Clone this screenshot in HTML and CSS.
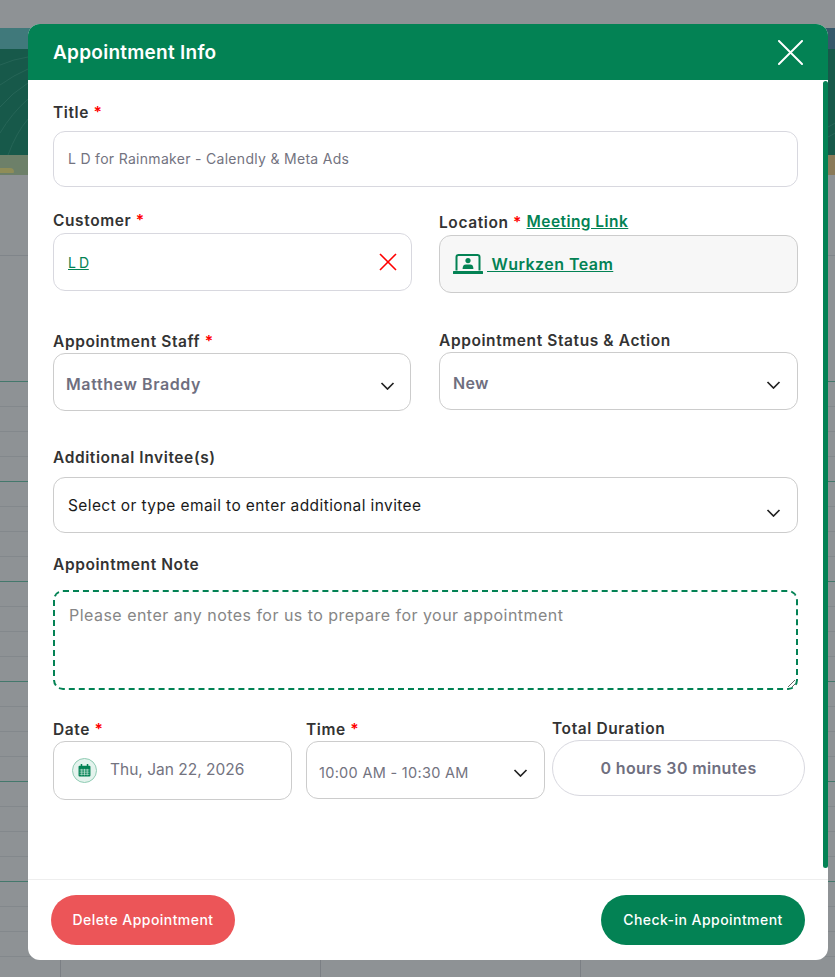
FILE: index.html
```html
<!DOCTYPE html>
<html>

<head>
    <title>Appointment Info</title>
    <meta charset="utf-8">
    <meta name="viewport" content="width=device-width, initial-scale=1.0">
    <link rel="stylesheet" href="styles.css">
</head>

<body>
    <!-- dimmed page behind the modal -->
    <div class="page">
        <div class="banner">
            <div class="banner-top"></div>
            <div class="banner-main">
                <svg class="banner-lines" viewBox="0 0 835 106" preserveAspectRatio="none">
                    <path d="M0 16 Q14 10 28 8" />
                    <path d="M0 36 Q14 26 28 20" />
                    <path d="M0 58 Q12 44 28 34" />
                    <path d="M0 84 Q12 64 28 50" />
                    <path d="M8 106 Q16 84 28 70" />
                    <path d="M828 78 Q832 76 835 74" />
                    <path d="M828 88 Q832 86 835 84" />
                </svg>
            </div>
            <div class="banner-bottom">
                <span class="banner-blob"></span>
            </div>
        </div>
        <div class="calendar-head"></div>
        <div class="calendar">
            <div class="cal-hour"></div>
            <div class="cal-hour"></div>
            <div class="cal-hour"></div>
            <div class="cal-hour"></div>
            <div class="cal-hour"></div>
            <div class="cal-hour"></div>
        </div>
    </div>

    <div class="modal">
        <div class="modal-header">
            <h2>Appointment Info</h2>
            <svg class="close-icon" viewBox="0 0 26 26">
                <path d="M1 1 L25 25 M25 1 L1 25" />
            </svg>
        </div>

        <div class="modal-body">
            <div class="form-row row-title">
                <label>Title <span class="req">*</span></label>
                <div class="box box-title">L D for Rainmaker - Calendly &amp; Meta Ads</div>
            </div>

            <div class="two-col row-customer">
                <div>
                    <label>Customer <span class="req">*</span></label>
                    <div class="box box-customer">
                        <a class="customer-link" href="#">L D</a>
                        <svg class="clear-icon" viewBox="0 0 18 18">
                            <path d="M1 1 L17 17 M17 1 L1 17" />
                        </svg>
                    </div>
                </div>
                <div class="col-location">
                    <label>Location <span class="req">*</span> <a class="meeting-link" href="#">Meeting Link</a></label>
                    <div class="box box-location">
                        <svg class="team-icon" viewBox="0 0 30 20">
                            <path class="team-frame" d="M3.5 16.5 V3 Q3.5 1 5.5 1 H24.5 Q26.5 1 26.5 3 V16.5" />
                            <circle cx="15" cy="6.6" r="2.6" />
                            <path d="M9.6 15 Q9.6 10.6 13 10.6 H17 Q20.4 10.6 20.4 15 Z" />
                            <rect x="0" y="17" width="30" height="3" rx="0.5" />
                        </svg>
                        <a class="team-link" href="#">&nbsp;Wurkzen Team</a>
                    </div>
                </div>
            </div>

            <div class="two-col row-staff">
                <div class="col-staff">
                    <label>Appointment Staff <span class="req">*</span></label>
                    <div class="box box-select box-staff">
                        <span>Matthew Braddy</span>
                        <svg class="chevron chevron-mid" viewBox="0 0 14 8"><path d="M1 1 L7 7 L13 1" /></svg>
                    </div>
                </div>
                <div class="col-status">
                    <label>Appointment Status &amp; Action</label>
                    <div class="box box-select box-status">
                        <span>New</span>
                        <svg class="chevron chevron-mid" viewBox="0 0 14 8"><path d="M1 1 L7 7 L13 1" /></svg>
                    </div>
                </div>
            </div>

            <div class="form-row row-invitee">
                <label>Additional Invitee(s)</label>
                <div class="box box-invitee">
                    <span>Select or type email to enter additional invitee</span>
                    <svg class="chevron chevron-low" viewBox="0 0 14 8"><path d="M1 1 L7 7 L13 1" /></svg>
                </div>
            </div>

            <div class="form-row row-note">
                <label>Appointment Note</label>
                <textarea class="note" placeholder="Please enter any notes for us to prepare for your appointment"></textarea>
            </div>

            <div class="date-row">
                <div class="col-date">
                    <label>Date <span class="req">*</span></label>
                    <div class="box box-date">
                        <span class="date-badge">
                            <svg viewBox="0 0 12 12">
                                <rect class="cal-body" x="0.5" y="1.5" width="11" height="10" rx="1" />
                                <rect class="cal-ring" x="2.5" y="0" width="1.4" height="2.6" />
                                <rect class="cal-ring" x="8.1" y="0" width="1.4" height="2.6" />
                                <path class="cal-grid" d="M1.5 5.5 H10.5 M1.5 7.5 H10.5 M1.5 9.5 H10.5 M3.5 4.5 V10.5 M6 4.5 V10.5 M8.5 4.5 V10.5" />
                            </svg>
                        </span>
                        <span class="date-text">Thu, Jan 22, 2026</span>
                    </div>
                </div>
                <div class="col-time">
                    <label>Time <span class="req">*</span></label>
                    <div class="box box-select box-time">
                        <span>10:00 AM - 10:30 AM</span>
                        <svg class="chevron" viewBox="0 0 14 8"><path d="M1 1 L7 7 L13 1" /></svg>
                    </div>
                </div>
                <div class="col-duration">
                    <label>Total Duration</label>
                    <div class="box-duration">0 hours 30 minutes</div>
                </div>
            </div>
            <div class="scroll-thumb"></div>
        </div>

        <div class="modal-footer">
            <button class="btn btn-delete">Delete Appointment</button>
            <button class="btn btn-checkin">Check-in Appointment</button>
        </div>
    </div>
</body>

</html>
```
FILE: styles.css
```css
* {
    box-sizing: border-box;
}

html,
body {
    margin: 0;
    height: 100%;
}

body {
    font-family: Inter, "Open Sans", sans-serif;
    background-color: #8e9295;
    overflow: hidden;
    color: #333;
}

/* page behind the backdrop */
.page {
    padding-top: 28px;
}

.banner-top {
    height: 21px;
    background: linear-gradient(90deg, #40797b 0, #40797b 30px, #35586a 100%);
}

.banner-main {
    height: 106px;
    background-color: #17594a;
}

.banner-lines {
    display: block;
    width: 100%;
    height: 100%;
}

.banner-lines path {
    fill: none;
    stroke: #266557;
    stroke-width: 1;
}

.banner-bottom {
    height: 20px;
    background: linear-gradient(90deg, #6d8069 0, #6d8069 30px, #8a7a58 100%);
    display: flex;
    align-items: flex-end;
    padding-bottom: 1px;
}

.banner-blob {
    width: 14px;
    height: 5px;
    margin-bottom: 1px;
    background-color: #8f8d58;
    border-radius: 0 8px 2px 0;
}

.calendar-head {
    height: 206px;
    background: linear-gradient(#80858a, #80858a) 0 80px / 100% 1px no-repeat;
}

.calendar {
    background-image: linear-gradient(90deg, #7b7f84 1px, transparent 1px);
    background-size: 260px 100%;
    background-position: 60px 0;
}

.cal-hour {
    height: 100px;
    border-top: 1px solid #44786c;
    background-image: linear-gradient(#83888c 1px, transparent 1px);
    background-size: 100% 25px;
    background-position: 0 24px;
}

/* modal */
.modal {
    position: absolute;
    left: 28px;
    top: 24px;
    width: 800px;
    height: 936px;
    background-color: #fff;
    border-radius: 12px;
    display: flex;
    flex-direction: column;
    overflow: hidden;
}

.modal-header {
    height: 56px;
    flex: none;
    background-color: #038254;
    display: flex;
    align-items: center;
    justify-content: space-between;
    padding: 0 25px;
}

.modal-header h2 {
    margin: 0;
    color: #fff;
    font-size: 19px;
    font-weight: 600;
    letter-spacing: 0.26px;
}

.close-icon {
    width: 25px;
    height: 25px;
}

.close-icon path {
    fill: none;
    stroke: #fff;
    stroke-width: 2;
    stroke-linecap: round;
}

.modal-body {
    position: relative;
    flex: 1;
    padding: 0 30px 0 25px;
}

.scroll-thumb {
    position: absolute;
    right: 0;
    top: 1px;
    width: 5px;
    height: 787px;
    background-color: #038254;
    border-radius: 3px;
}

label {
    display: block;
    height: 20px;
    line-height: 22px;
    font-size: 15.5px;
    font-weight: 600;
    letter-spacing: 0.6px;
    color: #333;
}

.req {
    color: #f00;
}

.box {
    display: flex;
    align-items: center;
    background-color: #fff;
    border: 1px solid #d8d8df;
    border-radius: 12px;
}

.two-col {
    display: grid;
    grid-template-columns: 359px 359px;
    column-gap: 27px;
}

.row-title {
    padding-top: 22px;
}

.box-title {
    margin-top: 9px;
    height: 56px;
    padding: 0 14px 2px;
    font-size: 14px;
    letter-spacing: 0.3px;
    color: #73737f;
}

.row-customer {
    margin-top: 23px;
}

.box-customer {
    margin-top: 3px;
    height: 58px;
    padding: 0 14px;
    justify-content: space-between;
}

.customer-link {
    font-size: 14px;
    letter-spacing: -0.4px;
    color: #038254;
}

.clear-icon {
    width: 18px;
    height: 18px;
}

.clear-icon path {
    fill: none;
    stroke: #f00;
    stroke-width: 1.6;
}

.col-location {
    padding-top: 2px;
}

.meeting-link {
    letter-spacing: 0.45px;
    color: #038254;
    position: relative;
    top: -1px;
}

.box-location {
    margin-top: 3px;
    height: 58px;
    padding: 0 13px;
    background-color: #f7f7f7;
    border-color: #cccccc;
}

.team-icon {
    width: 30px;
    height: 20px;
    fill: #038254;
}

.team-frame {
    fill: none;
    stroke: #038254;
    stroke-width: 2;
}

.team-link {
    margin-left: 4px;
    font-size: 16px;
    font-weight: 600;
    letter-spacing: 0.45px;
    color: #038254;
}

.row-staff {
    margin-top: 38px;
}

.col-status {
    margin-top: -1px;
}

.box-select {
    justify-content: space-between;
    border-color: #ccc;
}

.box-staff {
    margin-top: 2px;
    height: 58px;
    width: 358px;
    padding: 4px 15px 0 12px;
    font-size: 16px;
    font-weight: 600;
    letter-spacing: 0.6px;
    color: #6f6f7f;
}

.box-status {
    margin-top: 2px;
    height: 58px;
    padding: 4px 16px 0 13px;
    font-size: 16px;
    font-weight: 600;
    letter-spacing: 0.3px;
    color: #6f6f7f;
}

.chevron {
    width: 15px;
    height: 8px;
    flex: none;
}

.chevron path {
    fill: none;
    stroke: #222;
    stroke-width: 1.7;
}

.chevron-mid {
    margin-top: 3px;
}

.chevron-low {
    position: relative;
    top: 8px;
}

.row-invitee {
    margin-top: 36px;
}

.box-invitee {
    margin-top: 10px;
    height: 56px;
    padding: 0 16px 0 14px;
    justify-content: space-between;
    border-color: #ccc;
    font-size: 15.5px;
    letter-spacing: 0.4px;
    color: #1a1a1a;
}

.row-note {
    margin-top: 21px;
}

.note {
    display: block;
    width: 100%;
    height: 100px;
    margin-top: 16px;
    padding: 13px 14px;
    border: 2px dashed #038254;
    border-radius: 10px;
    outline: none;
    font-family: Inter, "Open Sans", sans-serif;
    font-size: 16px;
    letter-spacing: 0.47px;
    line-height: 20px;
    color: #333;
}

.note::placeholder {
    color: #868686;
    opacity: 1;
}

.date-row {
    display: flex;
    margin-top: 29px;
}

.col-date {
    width: 239px;
    flex: none;
}

.box-date {
    margin-top: 2px;
    height: 59px;
    padding: 0 18px;
    gap: 13px;
    border-color: #ccc;
    font-size: 15.5px;
    color: #73737f;
}

.date-text {
    margin-bottom: 2px;
}

.date-badge {
    width: 25px;
    height: 25px;
    flex: none;
    border-radius: 50%;
    border: 1px solid #8fcbb3;
    background-color: #e4f3ed;
    display: flex;
    align-items: center;
    justify-content: center;
}

.date-badge svg {
    width: 13px;
    height: 13px;
}

.cal-body {
    fill: #038254;
}

.cal-ring {
    fill: #038254;
}

.cal-grid {
    fill: none;
    stroke: #bfe2d4;
    stroke-width: 0.7;
}

.col-time {
    width: 239px;
    flex: none;
    margin-left: 14px;
}

.box-time {
    margin-top: 2px;
    height: 58px;
    padding: 5px 16px 0 12px;
    font-size: 14.5px;
    letter-spacing: 0.3px;
    color: #73737f;
}

.col-duration {
    width: 253px;
    flex: none;
    margin-left: 7px;
    margin-top: -1px;
}

.box-duration {
    margin-top: 2px;
    height: 56px;
    border: 1px solid #d8d8df;
    border-radius: 28px;
    display: flex;
    align-items: center;
    justify-content: center;
    font-size: 16px;
    font-weight: 600;
    letter-spacing: 0.35px;
    color: #6f6f7f;
}

/* footer */
.modal-footer {
    flex: none;
    height: 81px;
    border-top: 1px solid #eee;
    display: flex;
    align-items: flex-start;
    justify-content: space-between;
    padding: 15px 23px 0;
}

.btn {
    height: 50px;
    padding: 0 0 2px;
    border: none;
    border-radius: 25px;
    color: #fff;
    font-family: Inter, "Open Sans", sans-serif;
    font-size: 14px;
    font-weight: 500;
    letter-spacing: 0.45px;
}

.btn-delete {
    width: 184px;
    background-color: #ec5558;
}

.btn-checkin {
    width: 204px;
    background-color: #038254;
}
```
